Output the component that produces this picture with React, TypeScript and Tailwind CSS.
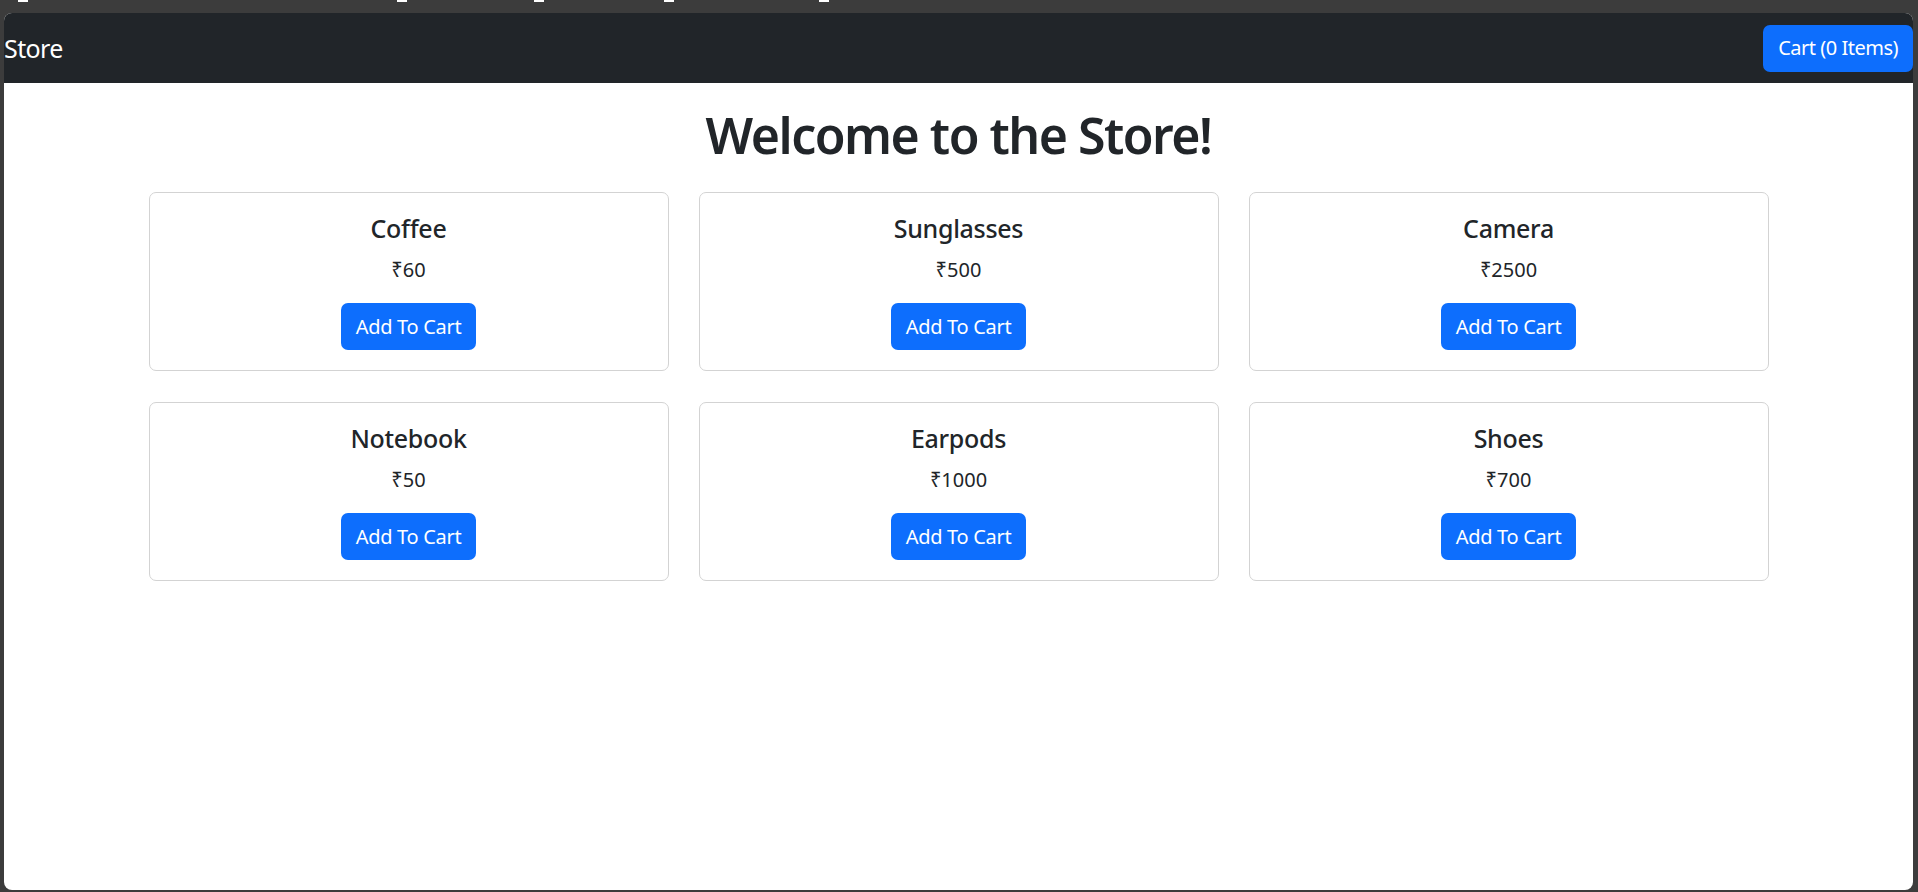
import React, { useState } from 'react';

const products = [
  { name: "Coffee", price: 60 },
  { name: "Sunglasses", price: 500 },
  { name: "Camera", price: 2500 },
  { name: "Notebook", price: 50 },
  { name: "Earpods", price: 1000 },
  { name: "Shoes", price: 700 },
];

const marks = ["ml-[18px]", "ml-[369px]", "ml-[127px]", "ml-[120px]", "ml-[145px]"];

export default function App() {
  const [count, setCount] = useState(0);

  return (
    <div className="w-full h-[892px] bg-[#3c3c3c] flex flex-col pr-[5px] pl-[4px] pb-[2px] font-['Noto_Sans',sans-serif] text-[#212529]">
      {/* top strip of the outer frame */}
      <div className="h-[13px] flex items-start -ml-[4px]">
        {marks.map((m, i) => (
          <div key={i} className={`${m} w-[10px] h-[2px] bg-white`} />
        ))}
      </div>

      <div className="flex-1 bg-white rounded-[8px] overflow-hidden flex flex-col">
        <nav className="h-[70px] bg-[#212529] flex items-center justify-between shrink-0">
          <a href="#" className="text-white text-[25px] leading-none tracking-[-0.6px]">
            Store
          </a>
          <button className="h-[47px] px-[15px] rounded-[7px] bg-[#0d6efd] text-white text-[20px] tracking-[-0.5px]">
            Cart ({count} Items)
          </button>
        </nav>

        <h1 className="mt-[22px] text-center text-[50px] font-semibold leading-[1.2] tracking-[-1.5px]">
          Welcome to the Store!
        </h1>

        <div className="mt-[27px] mx-auto w-[1620px] grid grid-cols-3 gap-x-[30px] gap-y-[31px]">
          {products.map((p) => (
            <div key={p.name} className="border border-[#d3d3d3] rounded-[7px] p-[20px] flex flex-col items-center">
              <h5 className="text-[25px] font-medium leading-[30px] tracking-[-0.3px]">{p.name}</h5>
              <p className="mt-[12px] text-[20px] leading-[30px]">₹{p.price}</p>
              <button
                onClick={() => setCount(count + 1)}
                className="mt-[18px] h-[47px] px-[15px] rounded-[7px] bg-[#0d6efd] text-white text-[20px] tracking-[-0.3px]"
              >
                Add To Cart
              </button>
            </div>
          ))}
        </div>
      </div>
    </div>
  );
}
